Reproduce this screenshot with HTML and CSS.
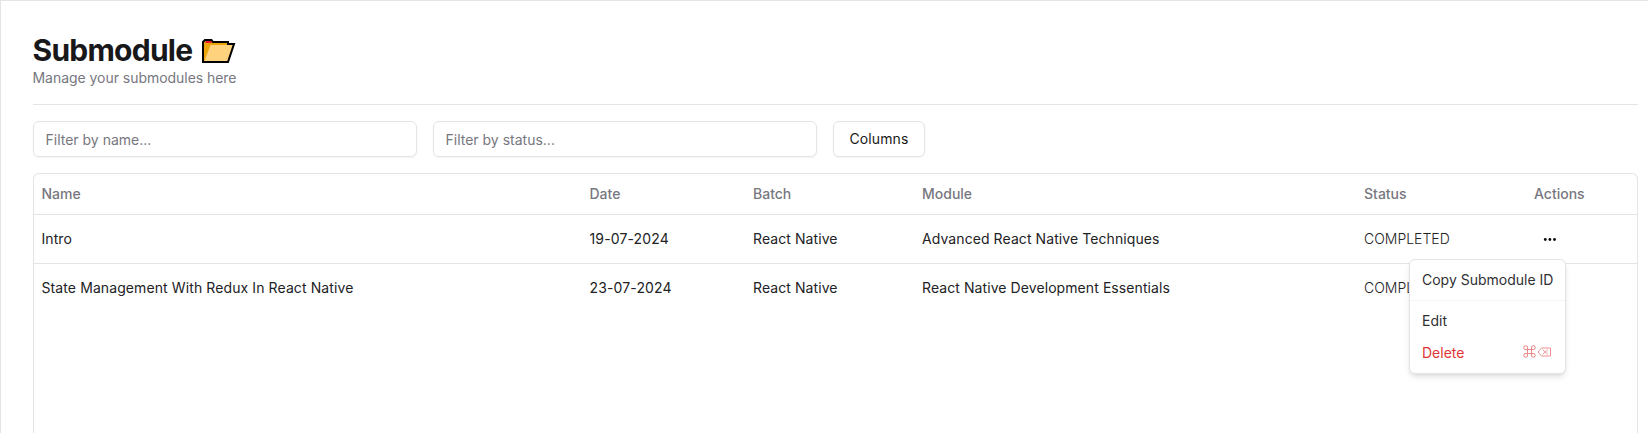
FILE: index.html
```html
<!DOCTYPE html>
<html lang="en">
<head>
<meta charset="utf-8">
<title>Submodule</title>
<link rel="stylesheet" href="styles.css">
</head>
<body>
<main class="page">
  <header class="heading">
    <h2 class="title">Submodule
      <svg class="folder" width="34" height="26" viewBox="0 0 34 26" aria-hidden="true">
        <path d="M1 23V3L3 1H9.500L11 3H26V5H32L26 23Z" fill="#eba40a"/>
        <path d="M3 4L4 2H9L10 4Z" fill="#ea1b2d"/>
        <path d="M8.500 6H31L25.500 22H2.500Z" fill="#ffd37d"/>
        <path d="M1 23V3L3 1H9.500L11 3H26V5H32L26 23Z" fill="none" stroke="#000" stroke-width="2"/>
      </svg>
    </h2>
    <p class="subtitle">Manage your submodules here</p>
  </header>
  <div class="filters">
    <input class="field" placeholder="Filter by name...">
    <input class="field" placeholder="Filter by status...">
    <button class="columns">Columns</button>
  </div>
  <section class="table">
    <div class="row head"><span>Name</span><span>Date</span><span>Batch</span><span>Module</span><span>Status</span><span>Actions</span></div>
    <div class="row"><span>Intro</span><span class="date">19-07-2024</span><span>React Native</span><span>Advanced React Native Techniques</span><span class="light">COMPLETED</span>
      <div class="actions">
        <svg class="dots" width="15" height="15" viewBox="0 0 15 15" fill="#09090b"><circle cx="3.300" cy="7.500" r="1.400"/><circle cx="7.900" cy="7.500" r="1.400"/><circle cx="12.500" cy="7.500" r="1.400"/></svg>
        <div class="menu">
          <div class="item">Copy Submodule ID</div>
          <div class="divider"></div>
          <div class="item">Edit</div>
          <div class="item danger">Delete
            <svg class="keys" width="30" height="14" viewBox="0 0 30 14" fill="none" stroke="currentColor">
              <path d="M4.500 4.500H8.500V8.500H4.500ZM4.500 4.500H3A1.900 1.900 0 1 1 4.500 3ZM8.500 4.500V3A1.900 1.900 0 1 1 10 4.500ZM8.500 8.500H10A1.900 1.900 0 1 1 8.500 10ZM4.500 8.500V10A1.900 1.900 0 1 1 3 8.500Z"/>
              <path d="M15 7L18.500 3H27.500V11H18.500ZM19.800 4.700L24.800 9.300M24.800 4.700L19.800 9.300" stroke-width=".9"/>
            </svg>
          </div>
        </div>
      </div>
    </div>
    <div class="row last"><span class="topic">State Management With Redux In React Native</span><span class="date">23-07-2024</span><span>React Native</span><span>React Native Development Essentials</span><span class="light">COMPLETED</span><span></span></div>
  </section>
</main>
</body>
</html>
```
FILE: styles.css
```css
* { box-sizing: border-box; }
body { margin: 0; background: #fff; color: #222225; font: 14px/20px Inter, sans-serif; overflow: hidden; }
.page { height: 433px; border: solid #e4e4e7; border-width: 1px 0 0 1px; padding: 31px 10px 0 32px; display: flex; flex-direction: column; }
.heading { height: 73px; border-bottom: 1px solid #e4e4e7; flex: none; }
.title { margin: 0 0 0 -.5px; color: #18181b; font-size: 30px; line-height: 36px; font-weight: 700; letter-spacing: -.75px; display: flex; gap: 10px; }
.folder { margin-top: 7px; }
.subtitle { margin: 0 0 0 -.5px; color: #777780; letter-spacing: -.04px; }
.filters { display: flex; gap: 16px; padding: 16px 0; flex: none; }
.field { width: 384px; height: 36px; border: 1px solid #e4e4e7; border-radius: 6px; padding: 4px 11.500px; font: inherit; background: transparent; box-shadow: 0 1px 2px rgb(0 0 0 / 5%); }
.field::placeholder { color: #777780; letter-spacing: 0; }
.columns { width: 92px; height: 36px; padding: 0; border: 1px solid #e4e4e7; border-radius: 6px; background: #fff; font: 400 14px/20px Inter, sans-serif; letter-spacing: .1px; color: #18181b; box-shadow: 0 1px 2px rgb(0 0 0 / 5%); }
.table { flex: 1; border: 1px solid #e4e4e7; border-bottom: 0; border-radius: 6px 6px 0 0; }
.row { height: 49px; display: grid; grid-template-columns: 548px 163.500px 169px 442px 170px 1fr; align-items: center; border-bottom: 1px solid #e4e4e7; padding-left: 7.500px; letter-spacing: .08px; }
.head { height: 41px; color: #777780; font-weight: 500; letter-spacing: 0; }
.last { height: 48px; border-bottom: 0; }
.date { letter-spacing: .14px; }
.topic { letter-spacing: .1px; }
.light { font-weight: 300; letter-spacing: 0; }
.actions { position: relative; height: 15px; padding-left: 8px; letter-spacing: 0; }
.dots { display: block; }
.menu { position: absolute; z-index: 1; top: 27px; left: -125px; width: 157px; padding: 4px 0; border: 1px solid #e4e4e7; border-radius: 6px; background: #fff; color: #303034; box-shadow: 0 4px 6px -1px rgb(0 0 0 / 10%), 0 2px 4px -2px rgb(0 0 0 / 10%); }
.item { height: 32px; padding: 6px 12px; white-space: nowrap; display: flex; justify-content: space-between; }
.divider { height: 1px; margin: 4px 0; background: #f4f4f5; }
.danger { color: #e03535; }
.keys { opacity: .6; margin-top: 2px; }
```
